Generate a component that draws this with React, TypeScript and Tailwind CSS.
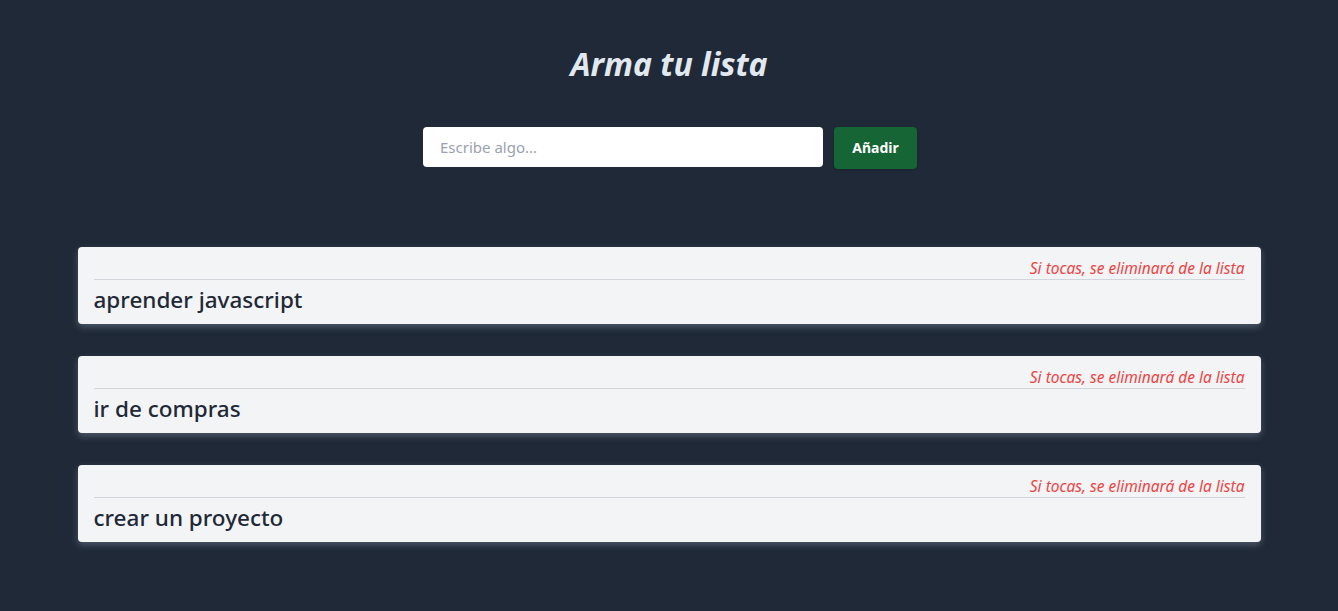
const ITEMS = ['aprender javascript', 'ir de compras', 'crear un proyecto'];

export default function App() {
  return (
    <div
      className="min-h-screen bg-[#1f2937] pt-[44px] pb-10"
      style={{ fontFamily: '"Noto Sans", "Open Sans", sans-serif' }}
    >
      <h1 className="text-center text-[32px] font-bold italic leading-[40px] text-[#e2e8f0]">
        Arma tu lista
      </h1>

      <form
        className="mt-[43px] flex justify-center gap-[11px] pl-[2px]"
        onSubmit={(e) => e.preventDefault()}
      >
        <input
          type="text"
          placeholder="Escribe algo..."
          className="h-10 w-[400px] rounded bg-white pr-4 pl-[17px] text-[15px] text-gray-800 outline-none placeholder:text-gray-400"
        />
        <button
          type="submit"
          className="h-[42px] w-[83px] rounded bg-[#166534] text-sm font-bold text-white shadow"
        >
          Añadir
        </button>
      </form>

      <ul className="mx-auto mt-[78px] flex w-[1183px] flex-col gap-8">
        {ITEMS.map((item) => (
          <li
            key={item}
            className="rounded bg-[#f3f4f6] px-4 pt-[11px] pb-[10px] shadow-[0_3px_7px_rgba(148,163,184,0.4)]"
          >
            <p className="border-b border-gray-300 pb-[1px] text-right text-[15.5px] italic leading-5 text-[#ef4444]">
              Si tocas, se eliminará de la lista
            </p>
            <p className="pt-[6px] text-[22.5px] font-medium leading-7 text-[#1f2937]">
              {item}
            </p>
          </li>
        ))}
      </ul>
    </div>
  );
}
